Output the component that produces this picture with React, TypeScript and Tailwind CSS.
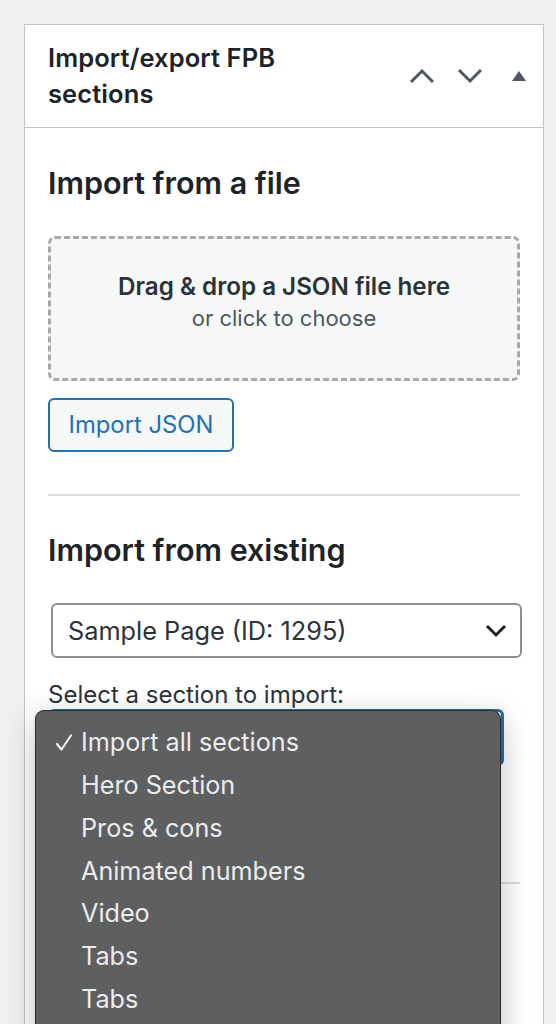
import React from "react";

const items = [
  "Import all sections",
  "Hero Section",
  "Pros & cons",
  "Animated numbers",
  "Video",
  "Tabs",
  "Tabs",
];

export default function App() {
  return (
    <div
      className="relative h-[1024px] w-[556px] overflow-hidden bg-[#f0f0f1] pt-[24px] pl-[24px]"
      style={{ fontFamily: "Inter, 'Noto Sans', sans-serif" }}
    >
      <div className="w-[520px] border border-[#c3c4c7] bg-white">
        {/* header */}
        <div className="flex h-[103px] items-center justify-between border-b border-[#c3c4c7] pl-[23px] pr-[16px]">
          <h2 className="w-[300px] text-[25.5px] font-semibold leading-[36px] tracking-[0.1px] text-[#1d2327]">
            Import/export FPB
            <br />
            sections
          </h2>
          <div className="flex items-center gap-[22px] text-[#50575e]">
            <svg width="26" height="16" viewBox="0 0 26 16" fill="none">
              <path d="M2 14 L13 3 L24 14" stroke="currentColor" strokeWidth="3" />
            </svg>
            <svg width="26" height="16" viewBox="0 0 26 16" fill="none">
              <path d="M2 2 L13 13 L24 2" stroke="currentColor" strokeWidth="3" />
            </svg>
            <svg width="16" height="12" viewBox="0 0 16 12" className="ml-[6px]">
              <path d="M8 1 L15 11 L1 11 Z" fill="currentColor" />
            </svg>
          </div>
        </div>

        {/* body */}
        <div className="px-[23px] pt-[39px]">
          <h3 className="text-[30.5px] font-semibold leading-[32px] text-[#1d2327]">
            Import from a file
          </h3>
          <div className="mt-[37px] flex h-[145px] flex-col items-center justify-center rounded-[7px] border-[3px] border-dashed border-[#a7aaad] bg-[#f6f7f7] pb-[14px]">
            <div className="text-[24.2px] font-semibold leading-[32px] text-[#2c3338]">
              Drag &amp; drop a JSON file here
            </div>
            <div className="text-[22px] leading-[30px] text-[#50575e]">or click to choose</div>
          </div>
          <button className="mt-[17px] flex h-[54px] w-[186px] items-center justify-center rounded-[6px] border-2 border-[#2271b1] bg-[#f6f7f7] text-[23.8px] text-[#2271b1]">
            Import JSON
          </button>

          <div className="mt-[42px] h-[2px] bg-[#dcdcde]" />

          <h3 className="mt-[38px] text-[30.5px] font-semibold leading-[32px] text-[#1d2327]">
            Import from existing
          </h3>
          <div className="mt-[37px] ml-[3px] mr-[-2px] flex h-[55px] items-center justify-between rounded-[6px] border-2 border-[#8c8f94] pl-[15px] pr-[13px]">
            <span className="text-[25.3px] text-[#2c3338]">Sample Page (ID: 1295)</span>
            <svg width="22" height="14" viewBox="0 0 22 14" fill="none">
              <path d="M2 2 L11 11 L20 2" stroke="#1d2327" strokeWidth="3" />
            </svg>
          </div>
          <div className="mt-[23px] text-[24px] leading-[28px] text-[#2c3338]">
            Select a section to import:
          </div>
          <div className="mr-[16px] h-[57px] rounded-[6px] border-[3px] border-[#2271b1] bg-white" />
          <div className="mt-[116px] h-[2px] bg-[#dcdcde]" />
          <div className="h-[200px]" />
        </div>
      </div>

      {/* dropdown menu overlay */}
      <div className="absolute left-[35px] top-[710px] h-[340px] w-[466px] rounded-[9px] border border-[#2a2b2d] bg-[#5e5f61] pt-[11px] shadow-[0_8px_30px_rgba(0,0,0,0.25)]">
        {items.map((t, i) => (
          <div
            key={i}
            className="relative flex h-[42.7px] items-center pl-[45px] text-[25.2px] text-[#ececec]"
          >
            {i === 0 && (
              <svg
                width="18"
                height="18"
                viewBox="0 0 18 18"
                fill="none"
                className="absolute left-[19px] top-[12px]"
              >
                <path
                  d="M2 10 L6.5 15.5 L16 1.5"
                  stroke="#ececec"
                  strokeWidth="2.2"
                  strokeLinecap="round"
                  strokeLinejoin="round"
                />
              </svg>
            )}
            {t}
          </div>
        ))}
      </div>
    </div>
  );
}
